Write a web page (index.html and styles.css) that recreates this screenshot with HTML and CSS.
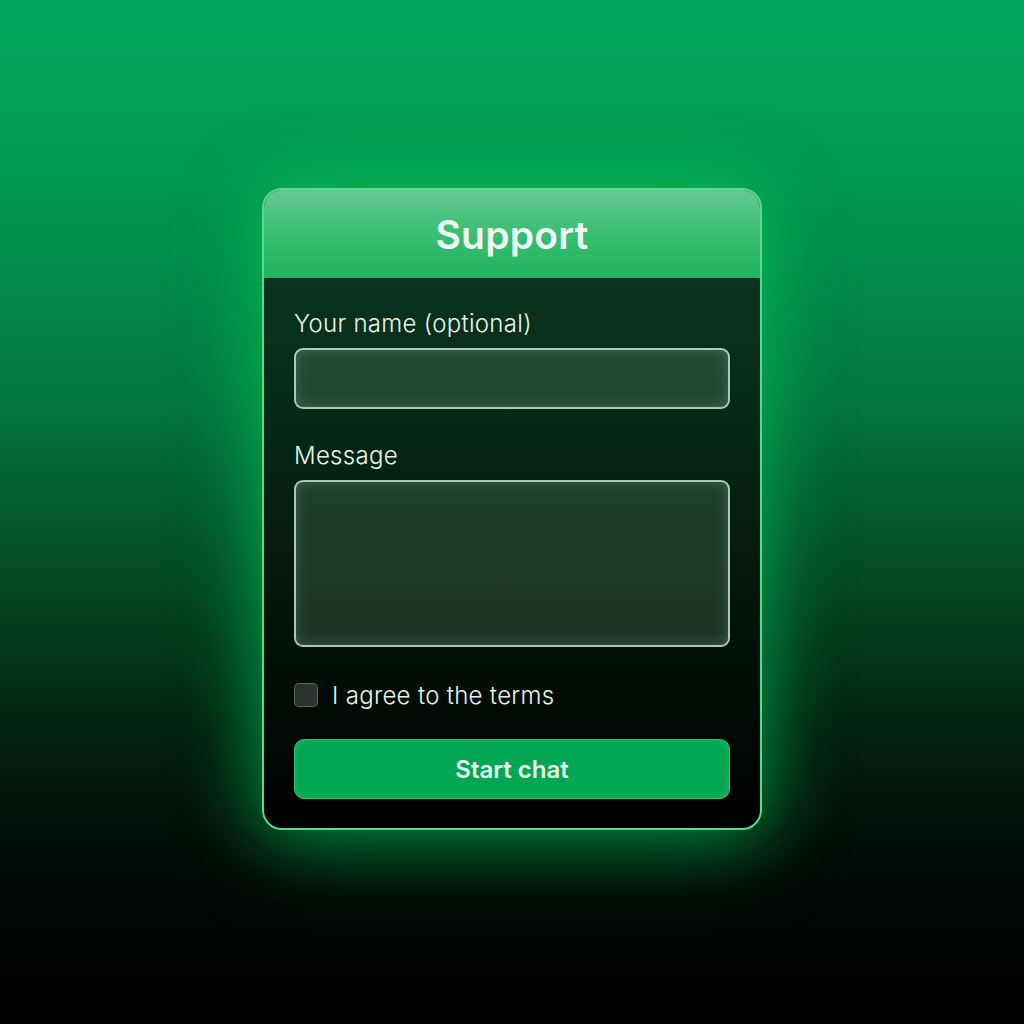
FILE: index.html
```html
<!DOCTYPE html>
<html lang="en">
<head>
    <meta charset="UTF-8">
    <meta name="viewport" content="width=device-width, initial-scale=1.0">
    <title>Support</title>
    <link rel="stylesheet" href="styles.css">
</head>
<body>
    <form class="card" id="supportForm">
        <!-- header -->
        <div class="card-header">
            <h1>Support</h1>
        </div>

        <div class="card-body">
            <label class="field-label" for="name">Your name (optional)</label>
            <input class="field" type="text" id="name" name="name">

            <label class="field-label second" for="message">Message</label>
            <textarea class="field area" id="message" name="message"></textarea>

            <label class="agree">
                <input type="checkbox" name="terms">
                <span class="box"></span>
                I agree to the terms
            </label>

            <button type="submit" class="start">Start chat</button>
        </div>
    </form>
</body>
</html>
```

FILE: styles.css
```css
html, body {
    height: 100%;
}
body {
    margin: 0;
    font-family: Inter, "Noto Sans", sans-serif;
    background: linear-gradient(180deg, #00a85a 0%, #02984f 18%, #037a3e 38%, #044d27 55%, #02200f 72%, #000805 86%, #000 100%);
    display: flex;
    align-items: center;
    justify-content: center;
}
.card {
    width: 500px;
    box-sizing: border-box;
    border: 2px solid #55dc8a;
    border-radius: 20px;
    overflow: hidden;
    margin-top: -6px;
    background: linear-gradient(180deg, #0b3a22 0%, #072c19 30%, #031509 65%, #000 100%);
    box-shadow: 0 0 70px rgba(0, 210, 95, 0.55), 0 20px 90px rgba(0, 190, 85, 0.35);
}
.card-header {
    height: 88px;
    display: flex;
    align-items: center;
    justify-content: center;
    background: linear-gradient(180deg, #64c991 0%, #3cbf75 45%, #1fb35d 100%);
}
.card-header h1 {
    margin: 0;
    font-size: 39px;
    font-weight: 600;
    color: #eefbf2;
    letter-spacing: 0.2px;
}
.card-body {
    padding: 32px 30px 29px;
    display: flex;
    flex-direction: column;
}
.field-label {
    font-size: 24px;
    font-weight: 350;
    letter-spacing: 0.3px;
    line-height: 28px;
    color: #e8f6ec;
    margin-bottom: 10px;
}
.field-label.second {
    margin-top: 33px;
}
.field {
    box-sizing: border-box;
    width: 100%;
    height: 61px;
    margin: 0;
    border: 2px solid rgba(200, 240, 212, 0.8);
    border-radius: 9px;
    background: rgba(110, 165, 128, 0.24);
    box-shadow: inset 0 0 14px rgba(200, 238, 210, 0.22);
    font: inherit;
    color: #e6f5ea;
    resize: none;
}
.field.area {
    height: 167px;
    display: block;
}
.agree {
    margin-top: 35px;
    height: 26px;
    display: flex;
    align-items: center;
    font-size: 24px;
    font-weight: 350;
    letter-spacing: 0.3px;
    color: #e8f6ec;
}
.agree input {
    display: none;
}
.agree .box {
    width: 22px;
    height: 22px;
    border: 1px solid rgba(130, 160, 140, 0.5);
    border-radius: 5px;
    background: #2a3530;
    margin-right: 14px;
}
.start {
    margin-top: 31px;
    height: 60px;
    border: 1px solid #2bc06d;
    border-radius: 10px;
    background: #00a651;
    box-shadow: inset 0 0 8px rgba(120, 230, 160, 0.25);
    font-family: inherit;
    font-size: 24px;
    font-weight: 600;
    color: #e8f8ee;
    cursor: pointer;
}
```
